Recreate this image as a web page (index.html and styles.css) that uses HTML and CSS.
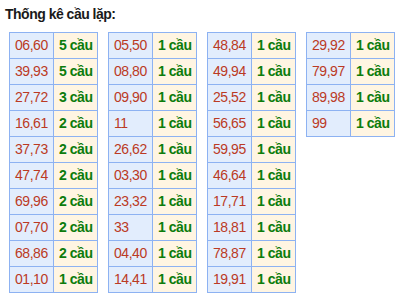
FILE: index.html
```html
<!DOCTYPE html>
<html lang="vi">
<head>
<meta charset="utf-8">
<title>Thống kê cầu lặp</title>
<link rel="stylesheet" href="styles.css">
</head>
<body>
<h3 class="title">Thống kê cầu lặp:</h3>
<div class="tables">
  <table class="cau">
    <tr><td class="num">06,60</td><td class="cnt">5 cầu</td></tr>
    <tr><td class="num">39,93</td><td class="cnt">5 cầu</td></tr>
    <tr><td class="num">27,72</td><td class="cnt">3 cầu</td></tr>
    <tr><td class="num">16,61</td><td class="cnt">2 cầu</td></tr>
    <tr><td class="num">37,73</td><td class="cnt">2 cầu</td></tr>
    <tr><td class="num">47,74</td><td class="cnt">2 cầu</td></tr>
    <tr><td class="num">69,96</td><td class="cnt">2 cầu</td></tr>
    <tr><td class="num">07,70</td><td class="cnt">2 cầu</td></tr>
    <tr><td class="num">68,86</td><td class="cnt">2 cầu</td></tr>
    <tr><td class="num">01,10</td><td class="cnt">1 cầu</td></tr>
  </table>
  <table class="cau">
    <tr><td class="num">05,50</td><td class="cnt">1 cầu</td></tr>
    <tr><td class="num">08,80</td><td class="cnt">1 cầu</td></tr>
    <tr><td class="num">09,90</td><td class="cnt">1 cầu</td></tr>
    <tr><td class="num">11</td><td class="cnt">1 cầu</td></tr>
    <tr><td class="num">26,62</td><td class="cnt">1 cầu</td></tr>
    <tr><td class="num">03,30</td><td class="cnt">1 cầu</td></tr>
    <tr><td class="num">23,32</td><td class="cnt">1 cầu</td></tr>
    <tr><td class="num">33</td><td class="cnt">1 cầu</td></tr>
    <tr><td class="num">04,40</td><td class="cnt">1 cầu</td></tr>
    <tr><td class="num">14,41</td><td class="cnt">1 cầu</td></tr>
  </table>
  <table class="cau">
    <tr><td class="num">48,84</td><td class="cnt">1 cầu</td></tr>
    <tr><td class="num">49,94</td><td class="cnt">1 cầu</td></tr>
    <tr><td class="num">25,52</td><td class="cnt">1 cầu</td></tr>
    <tr><td class="num">56,65</td><td class="cnt">1 cầu</td></tr>
    <tr><td class="num">59,95</td><td class="cnt">1 cầu</td></tr>
    <tr><td class="num">46,64</td><td class="cnt">1 cầu</td></tr>
    <tr><td class="num">17,71</td><td class="cnt">1 cầu</td></tr>
    <tr><td class="num">18,81</td><td class="cnt">1 cầu</td></tr>
    <tr><td class="num">78,87</td><td class="cnt">1 cầu</td></tr>
    <tr><td class="num">19,91</td><td class="cnt">1 cầu</td></tr>
  </table>
  <table class="cau">
    <tr><td class="num">29,92</td><td class="cnt">1 cầu</td></tr>
    <tr><td class="num">79,97</td><td class="cnt">1 cầu</td></tr>
    <tr><td class="num">89,98</td><td class="cnt">1 cầu</td></tr>
    <tr><td class="num">99</td><td class="cnt">1 cầu</td></tr>
  </table>
</div>
</body>
</html>
```

FILE: styles.css
```css
html, body {
  margin: 0;
  padding: 0;
  background: #ffffff;
}

body {
  font-family: "Liberation Sans", Arial, sans-serif;
  font-size: 14px;
}

.title {
  margin: 0;
  padding: 6px 0 0 5px;
  font-size: 14px;
  line-height: 16px;
  font-weight: bold;
  letter-spacing: -0.5px;
  color: #1a1a1a;
}

.tables {
  display: flex;
  align-items: flex-start;
  gap: 10px;
  padding: 10px 0 0 9px;
}

.cau {
  width: 89px;
  table-layout: fixed;
  border-collapse: separate;
  border-spacing: 1px;
  background: #8db2f2;
}

.cau td {
  padding: 0 0 0 5px;
  line-height: 25px;
  height: 25px;
  font-size: 14px;
  letter-spacing: -0.45px;
  white-space: nowrap;
  overflow: hidden;
}

.num {
  background: #e2edfd;
  color: #bb3a24;
}

.cnt {
  background: #fff5e2;
  color: #0c7c0c;
  font-weight: bold;
}
```
